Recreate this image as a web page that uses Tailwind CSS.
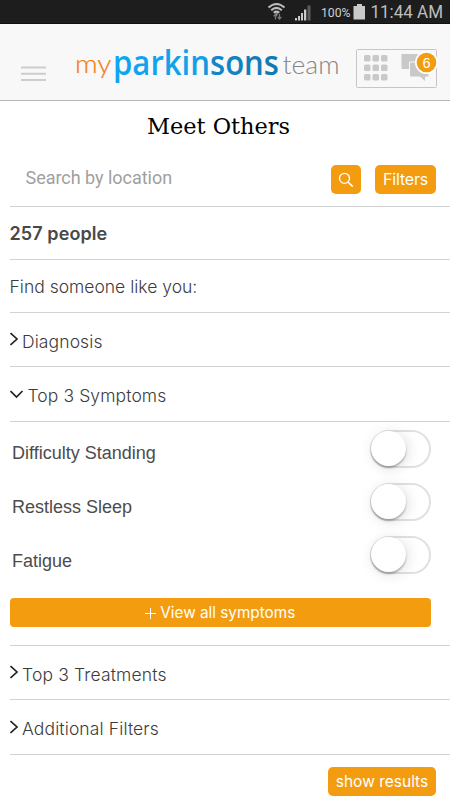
<!DOCTYPE html>
<html lang="en">
<head>
<meta charset="utf-8">
<title>Meet Others</title>
<script src="https://cdn.jsdelivr.net/npm/@tailwindcss/browser@4"></script>
</head>
<body class="bg-white">
<div class="w-[450px] h-[800px] overflow-hidden flex flex-col bg-white font-['Inter',sans-serif] font-light text-[17.5px] text-[#3c3c3c]">
  <div class="h-[24px] shrink-0 bg-[#1d1d1d] border-b border-[#111]">
    <svg class="block overflow-visible" width="450" height="23" viewBox="0 0 450 23">
      <g fill="none" stroke="#bdbdbd" stroke-width="2">
        <path d="M268.500 7.500Q276.500 .5 284.500 7.500"/><path d="M271.200 10.200Q276.500 5.500 281.800 10.200"/><path d="M273.700 12.800Q276.500 10.500 279.300 12.800"/>
      </g>
      <path d="M275 13.500h3l-1.500 2.500z" fill="#ccc"/>
      <path d="M275.500 19.500v-5M273.700 16.200l1.800-2 1.600 2M279.500 14v5M277.800 17l1.700 2 1.800-2" fill="none" stroke="#777" stroke-width="1.300"/>
      <g fill="#c9c9c9"><path d="M295 18h2v2.500h-2zM298 16h2v4.500h-2zM301 13h2v7.500h-2zM304 9.500h2.300v11H304z"/><path d="M307.500 5.500h3v15h-3z" fill="#5c5c5c"/><path d="M357 4h5v2h3v13.500h-11.500V6h3.500z"/></g>
      <text x="321" y="17" textLength="29.500" lengthAdjust="spacingAndGlyphs" font-family="Roboto" font-size="12.500" font-weight="400" fill="#d0d0d0">100%</text>
      <text x="370.500" y="18" textLength="72.500" lengthAdjust="spacingAndGlyphs" font-family="Roboto" font-size="18" font-weight="400" fill="#bdbdbd">11:44 AM</text>
    </svg>
  </div>
  <header class="h-[77px] shrink-0 bg-[#f8f8f8] border-b border-[#b5b5b5] flex">
    <svg class="block" width="450" height="76" viewBox="0 24 450 76">
      <defs><linearGradient id="blue" gradientUnits="userSpaceOnUse" x1="115" y1="0" x2="279" y2="0"><stop offset="0" stop-color="#10a5f0"/><stop offset=".54" stop-color="#12a0e8"/><stop offset=".58" stop-color="#1188cb"/><stop offset="1" stop-color="#1278b0"/></linearGradient></defs>
      <path d="M21 67.500h25M21 73.700h25M21 80h25" stroke="#cdcdcd" stroke-width="2"/>
      <text x="75" y="73" textLength="36.500" lengthAdjust="spacingAndGlyphs" font-family="Lato" font-weight="300" font-size="26" fill="#f57c14" stroke="#f57c14" stroke-width=".2">my</text>
      <text x="113" y="75" textLength="166" lengthAdjust="spacingAndGlyphs" font-family="Open Sans" font-weight="600" font-size="35" fill="url(#blue)">parkinsons</text>
      <text x="282.500" y="74" textLength="57" lengthAdjust="spacingAndGlyphs" font-family="Lato" font-weight="300" font-size="26" fill="#858585">team</text>
      <rect x="356.500" y="49.500" width="80" height="38" rx="1" fill="none" stroke="#c6c6c6"/>
      <g fill="#c9c9c9">
        <rect x="364" y="55" width="6.500" height="6.500" rx="1.500"/><rect x="372.500" y="55" width="6.500" height="6.500" rx="1.500"/><rect x="381" y="55" width="6.500" height="6.500" rx="1.500"/>
        <rect x="364" y="64.500" width="6.500" height="6.500" rx="1.500"/><rect x="372.500" y="64.500" width="6.500" height="6.500" rx="1.500"/><rect x="381" y="64.500" width="6.500" height="6.500" rx="1.500"/>
        <rect x="364" y="74" width="6.500" height="6.500" rx="1.500"/><rect x="372.500" y="74" width="6.500" height="6.500" rx="1.500"/><rect x="381" y="74" width="6.500" height="6.500" rx="1.500"/>
        <path d="M401.500 54H420v15h-18.500z"/>
        <path d="M409.500 62H429V77h-3.500v5l-5.500-5h-10.500z" stroke="#f8f8f8" stroke-width="1"/>
      </g>
      <circle cx="426.500" cy="62.500" r="11.500" fill="#fff"/><circle cx="426.500" cy="62.500" r="9.800" fill="#f39c0f"/>
      <text x="426.500" y="67.500" text-anchor="middle" font-family="Liberation Sans" font-size="14.500" fill="#fff">6</text>
    </svg>
  </header>
  <h1 class="h-[50px] shrink-0 flex items-center justify-center pr-[13px] text-black"><svg width="144" height="30" class="block"><text x="0" y="22.500" textLength="143" lengthAdjust="spacingAndGlyphs" font-family="DejaVu Serif" font-size="22" font-weight="400">Meet Others</text></svg></h1>
  <main class="flex-1 pl-[9.5px] flex flex-col">
    <div class="h-[56px] shrink-0 border-b border-[#d2d2d2] flex items-start pt-[14px] pl-4 pr-[14px]">
      <span class="font-['Roboto',sans-serif] font-normal text-[18px] leading-[26px] tracking-[-0.03px] text-[#a0a0a0] flex-1">Search by location</span>
      <button class="w-[30px] h-[29px] rounded-[5px] bg-[#f39c0f] flex items-center justify-center"><svg width="18" height="18" viewBox="0 0 18 18" fill="none" stroke="white" stroke-width="1.300"><circle cx="7.500" cy="7.300" r="5"/><path d="M11 11l4.800 4.600" stroke-width="1.700"/></svg></button>
      <button class="w-[61px] h-[29px] rounded-[5px] bg-[#f39c0f] ml-[14px] text-white text-[16px] font-normal tracking-[-0.2px] pb-px">Filters</button>
    </div>
    <div class="h-[53px] shrink-0 border-b border-[#d2d2d2] flex items-center font-semibold text-[18px] tracking-[0.1px] text-[#484848]"><span>257 people</span></div>
    <div class="h-[53px] shrink-0 border-b border-[#d2d2d2] flex items-center pt-[2px]"><span>Find someone like you:</span></div>
    <div class="h-[54px] shrink-0 border-b border-[#d2d2d2] flex items-center pt-[5px]"><svg class="w-[12.5px] h-[16px] shrink-0 -mt-[6px]" viewBox="0 0 12.5 16" fill="none" stroke="#222" stroke-width="1.700"><path d="M.5 2L7 8 .5 14"/></svg><span class="tracking-[0.1px]">Diagnosis</span></div>
    <div class="h-[55px] shrink-0 border-b border-[#d2d2d2] flex items-center pt-1"><svg class="w-[18px] h-[16px] shrink-0 -mt-[5px]" viewBox="0 0 18 16" fill="none" stroke="#222" stroke-width="1.700"><path d="M.5 5l6 6 6-6"/></svg><span class="tracking-[0.1px]">Top 3 Symptoms</span></div>
    <div class="h-[224px] shrink-0 border-b border-[#d2d2d2] pr-[19px] pt-[4px]">
      <div class="font-['Liberation_Sans',sans-serif] font-normal text-[18px] text-[#4c4c4c]">
        <div class="h-[53px] flex items-start justify-between pl-[2.5px]"><span class="pt-[14px] leading-[27px]">Difficulty Standing</span><span class="mt-[4px] w-[61px] h-[38px] rounded-full border-2 border-[#e1e1e1] bg-white flex"><i class="block w-[35px] h-[35px] -mt-px -ml-px rounded-full bg-white shadow-[0_2px_2px_#0004,2px_2px_14px_#0002]"></i></span></div>
        <div class="h-[53px] flex items-start justify-between pl-[2.5px]"><span class="pt-[15px] leading-[27px]">Restless Sleep</span><span class="mt-[4px] w-[61px] h-[38px] rounded-full border-2 border-[#e1e1e1] bg-white flex"><i class="block w-[35px] h-[35px] -mt-px -ml-px rounded-full bg-white shadow-[0_2px_2px_#0004,2px_2px_14px_#0002]"></i></span></div>
        <div class="h-[53px] flex items-start justify-between pl-[2.5px]"><span class="pt-[16px] leading-[27px]">Fatigue</span><span class="mt-[4px] w-[61px] h-[38px] rounded-full border-2 border-[#e1e1e1] bg-white flex"><i class="block w-[35px] h-[35px] -mt-px -ml-px rounded-full bg-white shadow-[0_2px_2px_#0004,2px_2px_14px_#0002]"></i></span></div>
      </div>
      <button class="mt-[13px] w-[421.5px] h-[29px] rounded-[4px] bg-[#f39c0f] text-white text-[15.3px] font-normal flex items-center justify-center gap-1 pt-px"><svg width="11" height="11" stroke="white"><path d="M5.500 0v11M0 5.500h11"/></svg><span>View all symptoms</span></button>
    </div>
    <div class="h-[54px] shrink-0 border-b border-[#d2d2d2] flex items-center pt-[5px]"><svg class="w-[12.5px] h-[16px] shrink-0 -mt-[6px]" viewBox="0 0 12.5 16" fill="none" stroke="#222" stroke-width="1.700"><path d="M.5 2L7 8 .5 14"/></svg><span class="tracking-[0.15px]">Top 3 Treatments</span></div>
    <div class="h-[55px] shrink-0 border-b border-[#d2d2d2] flex items-center pt-1"><svg class="w-[12.5px] h-[16px] shrink-0 -mt-[5px]" viewBox="0 0 12.5 16" fill="none" stroke="#222" stroke-width="1.700"><path d="M.5 2L7 8 .5 14"/></svg><span class="tracking-[0.12px]">Additional Filters</span></div>
    <div class="flex justify-end pr-[14px] pt-[12px]"><button class="w-[108px] h-[29px] rounded-[5px] bg-[#f39c0f] text-white text-[15.5px] font-normal">show results</button></div>
  </main>
</div>
</body>
</html>
